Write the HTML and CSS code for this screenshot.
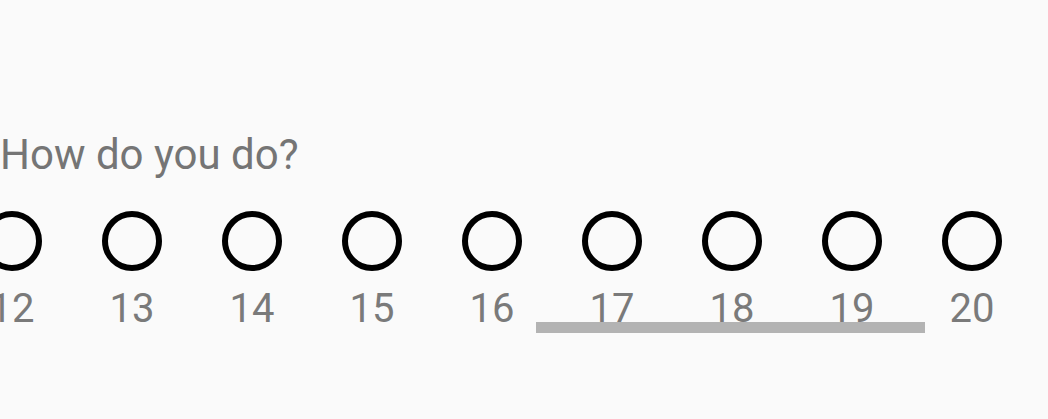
FILE: index.html
```html
<!DOCTYPE html>
<html lang="en">
<head>
  <meta charset="UTF-8" />
  <meta name="viewport" content="width=device-width, initial-scale=1.0" />
  <title>How do you do?</title>
  <link rel="stylesheet" href="styles.css">
</head>
<body>
  <div class="screen">
    <p class="question">How do you do?</p>

    <div class="scale">
      <div class="options">
        <div class="option"><span class="ring"></span><span class="num">12</span></div>
        <div class="option"><span class="ring"></span><span class="num">13</span></div>
        <div class="option"><span class="ring"></span><span class="num">14</span></div>
        <div class="option"><span class="ring"></span><span class="num">15</span></div>
        <div class="option"><span class="ring"></span><span class="num">16</span></div>
        <div class="option"><span class="ring"></span><span class="num">17</span></div>
        <div class="option"><span class="ring"></span><span class="num">18</span></div>
        <div class="option"><span class="ring"></span><span class="num">19</span></div>
        <div class="option"><span class="ring"></span><span class="num">20</span></div>
      </div>
      <div class="indicator"></div>
    </div>
  </div>
</body>
</html>
```

FILE: styles.css
```css
html, body {
  margin: 0;
  height: 100%;
}
body {
  font-family: Roboto, 'Noto Sans', sans-serif;
  background-color: #fafafa;
  overflow: hidden;
}
.screen {
  padding-top: 131px;
}
.question {
  margin: 0;
  font-size: 42px;
  line-height: 48px;
  color: #757575;
}
.scale {
  position: relative;
  margin-top: 32px;
}
.options {
  display: flex;
  margin-left: -48px;
}
.option {
  flex: 0 0 120px;
  display: flex;
  flex-direction: column;
  align-items: center;
}
.ring {
  width: 60px;
  height: 60px;
  box-sizing: border-box;
  border: 6px solid #000;
  border-radius: 50%;
}
.num {
  margin-top: 14px;
  font-size: 40px;
  line-height: 47px;
  color: #7a7a7a;
}
.indicator {
  position: absolute;
  left: 536px;
  top: 111px;
  width: 389px;
  height: 11px;
  background-color: #b3b3b3;
}
```
